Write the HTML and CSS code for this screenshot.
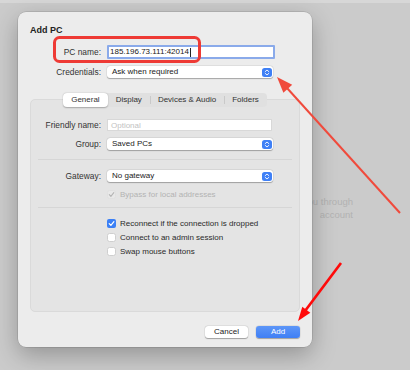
FILE: index.html
```html
<!DOCTYPE html>
<html>
<head>
<meta charset="utf-8">
<link rel="stylesheet" href="styles.css">
</head>
<body>
<div class="desktop">
  <div class="bg-text">you through<br>account</div>

  <div class="dialog">
    <div class="title">Add PC</div>

    <div class="form">
      <div class="row">
        <span class="lbl">PC name:</span>
        <div class="input focus">185.196.73.111:42014<span class="caret"></span></div>
      </div>
      <div class="row">
        <span class="lbl">Credentials:</span>
        <div class="popup wide">
          <span>Ask when required</span>
          <svg class="stepper" width="10" height="9" viewBox="0 0 10 9"><rect width="10" height="9" rx="2.5" fill="#3f80f6"/><path d="M3.2 3.6 L5 2 L6.8 3.6 M3.2 5.4 L5 7 L6.8 5.4" fill="none" stroke="#fff" stroke-width="0.9" stroke-linecap="round" stroke-linejoin="round"/></svg>
        </div>
      </div>
    </div>

    <div class="tabs">
      <span class="tab active">General</span>
      <span class="tab">Display</span>
      <span class="tab sep">Devices &amp; Audio</span>
      <span class="tab sep">Folders</span>
    </div>

    <div class="box">
      <div class="brow">
        <span class="lbl">Friendly name:</span>
        <div class="field placeholder">Optional</div>
      </div>
      <div class="brow gap7">
        <span class="lbl">Group:</span>
        <div class="popup">
          <span>Saved PCs</span>
          <svg class="stepper" width="10" height="9" viewBox="0 0 10 9"><rect width="10" height="9" rx="2.5" fill="#3f80f6"/><path d="M3.2 3.6 L5 2 L6.8 3.6 M3.2 5.4 L5 7 L6.8 5.4" fill="none" stroke="#fff" stroke-width="0.9" stroke-linecap="round" stroke-linejoin="round"/></svg>
        </div>
      </div>

      <div class="sep-line s1"></div>

      <div class="brow gw">
        <span class="lbl">Gateway:</span>
        <div class="popup">
          <span>No gateway</span>
          <svg class="stepper" width="10" height="9" viewBox="0 0 10 9"><rect width="10" height="9" rx="2.5" fill="#3f80f6"/><path d="M3.2 3.6 L5 2 L6.8 3.6 M3.2 5.4 L5 7 L6.8 5.4" fill="none" stroke="#fff" stroke-width="0.9" stroke-linecap="round" stroke-linejoin="round"/></svg>
        </div>
      </div>

      <div class="crow bypass disabled">
        <svg class="cb" width="9" height="9" viewBox="0 0 9 9"><rect x="0.5" y="0.5" width="8" height="8" rx="2" fill="#e8e8e8" stroke="#e0e0e0"/><path d="M2.3 4.7 L3.9 6.3 L6.8 2.7" fill="none" stroke="#b5b5b5" stroke-width="1.1" stroke-linecap="round" stroke-linejoin="round"/></svg>
        <span>Bypass for local addresses</span>
      </div>

      <div class="sep-line s2"></div>

      <div class="crow first">
        <svg class="cb" width="9" height="9" viewBox="0 0 9 9"><rect width="9" height="9" rx="2" fill="#3b80f6"/><path d="M2.2 4.7 L3.9 6.4 L6.9 2.6" fill="none" stroke="#fff" stroke-width="1.2" stroke-linecap="round" stroke-linejoin="round"/></svg>
        <span>Reconnect if the connection is dropped</span>
      </div>
      <div class="crow">
        <svg class="cb" width="9" height="9" viewBox="0 0 9 9"><rect x="0.5" y="0.5" width="8" height="8" rx="2" fill="#fff" stroke="#cfcfcf"/></svg>
        <span>Connect to an admin session</span>
      </div>
      <div class="crow">
        <svg class="cb" width="9" height="9" viewBox="0 0 9 9"><rect x="0.5" y="0.5" width="8" height="8" rx="2" fill="#fff" stroke="#cfcfcf"/></svg>
        <span>Swap mouse buttons</span>
      </div>
    </div>

    <div class="footer">
      <button class="btn">Cancel</button>
      <button class="btn primary">Add</button>
    </div>
  </div>

  <svg class="annot" width="410" height="370" viewBox="0 0 410 370">
    <rect x="54.5" y="37.5" width="145" height="24" rx="5" fill="none" stroke="#ee3a35" stroke-width="3"/>
    <line x1="400" y1="213" x2="287" y2="88" stroke="#f04a3c" stroke-width="2"/>
    <polygon points="277,77 283.4,92.8 292.2,84.8" fill="#f04a3c"/>
    <line x1="341" y1="263" x2="305" y2="311" stroke="#ff0a0a" stroke-width="2.6"/>
    <polygon points="298,321 310.3,312.8 302.3,306.8" fill="#ff0a0a"/>
  </svg>
</div>
</body>
</html>
```

FILE: styles.css
```css
* {
  box-sizing: border-box;
  margin: 0;
  padding: 0;
}

body {
  margin: 0;
  background: #cbcbcb;
  font-family: "Liberation Sans", Arial, sans-serif;
  font-size: 8px;
  color: #2a2a2a;
}

.desktop {
  position: relative;
  width: 410px;
  height: 370px;
  overflow: hidden;
  padding: 12px 0 0 18px;
  background: linear-gradient(#d7d7d7 0, #d7d7d7 3px, #cbcbcb 3px);
}

.bg-text {
  position: absolute;
  right: 57px;
  top: 195px;
  font-size: 9.5px;
  line-height: 13px;
  color: #b2b2b2;
  text-align: right;
  white-space: nowrap;
}

.dialog {
  position: relative;
  z-index: 1;
  width: 294px;
  background: #ececec;
  border-radius: 8px;
  padding: 12px 12px 9px;
  box-shadow: 0 0 0 0.5px rgba(0, 0, 0, 0.18), 0 8px 24px rgba(0, 0, 0, 0.28);
}

.title {
  font-weight: bold;
  font-size: 9px;
  line-height: 12px;
  color: #222;
}

.form {
  margin-top: 9px;
  display: flex;
  flex-direction: column;
  gap: 7px;
}

.row {
  display: flex;
  align-items: center;
  gap: 6px;
}

.lbl {
  flex: none;
  width: 71px;
  text-align: right;
  color: #333;
  font-size: 8.4px;
  white-space: nowrap;
}

.input {
  width: 168px;
  height: 14px;
  background: #fff;
  border: 2px solid #8aaaea;
  border-radius: 1px;
  padding-left: 1px;
  line-height: 10px;
  color: #222;
  display: flex;
  align-items: center;
}

.caret {
  display: inline-block;
  width: 1px;
  height: 9px;
  background: #222;
  margin-left: 1px;
}

.popup {
  width: 166px;
  height: 12px;
  background: #fff;
  border-radius: 3px;
  box-shadow: 0 0.5px 1px rgba(0, 0, 0, 0.28), 0 0 0 0.5px rgba(0, 0, 0, 0.06);
  padding: 0 1px 0 5px;
  display: flex;
  align-items: center;
  justify-content: space-between;
  line-height: 12px;
  color: #222;
}

.stepper {
  display: block;
  flex: none;
}

.tabs {
  position: relative;
  z-index: 1;
  display: flex;
  width: max-content;
  margin: 15px auto 0;
  background: #e0e0e0;
  border-radius: 4px;
  height: 14px;
}

.tab {
  position: relative;
  padding: 0 8px;
  line-height: 14px;
  color: #333;
}

.tab.active {
  background: #fff;
  border-radius: 4px;
  box-shadow: 0 0.5px 1.5px rgba(0, 0, 0, 0.28);
}

.tab.sep::before {
  content: "";
  position: absolute;
  left: 0;
  top: 3px;
  width: 1px;
  height: 8px;
  background: #c9c9c9;
}

.box {
  margin-top: -8px;
  height: 213px;
  background: #e4e4e4;
  border: 1px solid #dadada;
  border-radius: 5px;
  padding-top: 19px;
}

.box .lbl {
  width: 70px;
}

.brow {
  display: flex;
  align-items: center;
  gap: 6px;
  height: 12px;
}

.brow.gap7 {
  margin-top: 7px;
}

.brow.gw {
  margin-top: 10px;
}

.field {
  width: 165px;
  height: 12px;
  background: #fff;
  border: 0.5px solid #d8d8d8;
  padding-left: 3px;
  line-height: 11px;
}

.placeholder {
  color: #c2c2c2;
}

.sep-line {
  height: 1px;
  background: #d6d6d6;
  margin: 0 7px;
}

.sep-line.s1 {
  margin-top: 9px;
}

.sep-line.s2 {
  margin-top: 7px;
}

.crow {
  display: flex;
  align-items: center;
  gap: 4px;
  height: 12px;
  margin-top: 2px;
  padding-left: 76px;
  color: #2a2a2a;
}

.crow.bypass {
  margin-top: 6px;
}

.crow.first {
  margin-top: 9px;
}

.crow.disabled {
  color: #b3b3b3;
}

.cb {
  display: block;
  flex: none;
}

.footer {
  margin-top: 14px;
  display: flex;
  justify-content: flex-end;
  gap: 8px;
}

.btn {
  height: 12px;
  border: none;
  border-radius: 3px;
  font-family: "Liberation Sans", Arial, sans-serif;
  font-size: 8px;
  line-height: 12px;
  background: #fff;
  color: #222;
  box-shadow: 0 0.5px 1px rgba(0, 0, 0, 0.3), 0 0 0 0.5px rgba(0, 0, 0, 0.06);
  width: 43px;
}

.btn.primary {
  width: 44px;
  background: linear-gradient(#5d96f8, #3f7ff5);
  color: #fff;
}

.annot {
  position: absolute;
  left: 0;
  top: 0;
  z-index: 2;
  pointer-events: none;
}
```
